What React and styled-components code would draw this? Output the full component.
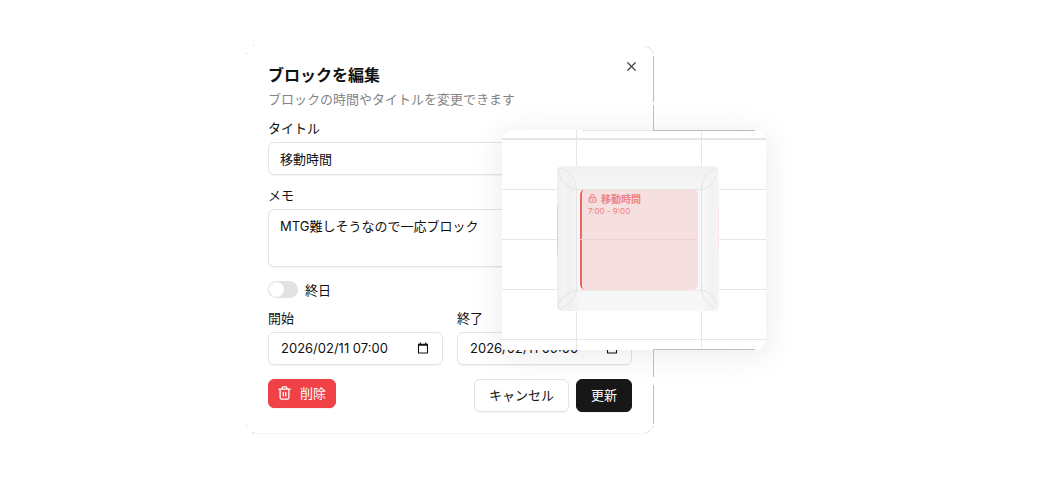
import React, { useState } from "react";
import styled, { createGlobalStyle } from "styled-components";
import { LockKeyhole, X } from "lucide-react";

export default function App() {
	const [title, setTitle] = useState("移動時間");
	const [memo, setMemo] = useState("MTG難しそうなので一応ブロック");
	const [allDay, setAllDay] = useState(false);
	const [start, setStart] = useState("2026/02/11 07:00");
	const [end, setEnd] = useState("2026/02/11 09:00");

	return (
		<>
			<GlobalStyle />
			<Page>
				<Stage>
					<Dialog role="dialog" aria-labelledby="dialog-title">
						<Header>
							<Title id="dialog-title">ブロックを編集</Title>
							<CloseButton type="button" aria-label="閉じる">
								<X size={15} strokeWidth={2} />
							</CloseButton>
						</Header>
						<Description>ブロックの時間やタイトルを変更できます</Description>

						<Field>
							<Label htmlFor="title">タイトル</Label>
							<TextInput
								id="title"
								value={title}
								onChange={(e) => setTitle(e.target.value)}
							/>
						</Field>
						<Field>
							<Label htmlFor="memo">メモ</Label>
							<TextArea
								id="memo"
								value={memo}
								onChange={(e) => setMemo(e.target.value)}
							/>
						</Field>

						<SwitchRow>
							<Switch
								id="all-day"
								type="checkbox"
								role="switch"
								checked={allDay}
								onChange={(e) => setAllDay(e.target.checked)}
							/>
							<Label htmlFor="all-day">終日</Label>
						</SwitchRow>

						<DateRow>
							<DateField id="start" label="開始" value={start} onChange={setStart} />
							<DateField id="end" label="終了" value={end} onChange={setEnd} />
						</DateRow>

						<Footer>
							<Button type="button" $variant="danger">
								<TrashIcon />
								削除
							</Button>
							<Actions>
								<Button type="button">キャンセル</Button>
								<Button type="button" $variant="primary">
									更新
								</Button>
							</Actions>
						</Footer>
					</Dialog>
					<Preview />
					<Edges />
				</Stage>
			</Page>
		</>
	);
}

function DateField({ id, label, value, onChange }) {
	return (
		<Field>
			<Label htmlFor={id}>{label}</Label>
			<DateBox>
				<DateInput
					id={id}
					value={value}
					onChange={(e) => onChange(e.target.value)}
				/>
				<PickerButton type="button" aria-label={`${label}の日付を選択`}>
					<svg width="12" height="12" viewBox="0 0 12 12">
						<path
							d="M1.500 2.500h9v8.500h-9z"
							fill="none"
							stroke="#111"
							strokeWidth="1.1"
							strokeLinejoin="round"
						/>
						<path d="M1 1.800h10v2H1zM2.700.6h1.200v1.500H2.700zM8.100.6h1.200v1.500H8.100z" fill="#111" />
					</svg>
				</PickerButton>
			</DateBox>
		</Field>
	);
}

function TrashIcon() {
	return (
		<svg
			width="13"
			height="14"
			viewBox="0 0 13 14"
			fill="none"
			stroke="currentColor"
			strokeWidth="1.3"
			strokeLinecap="round"
			strokeLinejoin="round"
			aria-hidden="true"
		>
			<path d="M.9 3.200h11.200M4.200 3V1.800q0-.9.9-.9h2.800q.9 0 .9.900V3" />
			<path d="M2.100 3.400v8q0 1.700 1.700 1.700h5.400q1.700 0 1.700-1.700v-8M5.300 6.300v3.600M7.700 6.300v3.600" />
		</svg>
	);
}

function Preview() {
	return (
		<PreviewCard>
			<Drawing viewBox="0 0 264 220" aria-hidden="true">
				<GridLines />
			</Drawing>
			<EventBlock>
				<EventTitle>
					<LockKeyhole size={9} strokeWidth={3} />
					移動時間
				</EventTitle>
				<EventTime>7:00 - 9:00</EventTime>
			</EventBlock>
			<Drawing viewBox="0 0 264 220" aria-hidden="true">
				<Bezel />
			</Drawing>
		</PreviewCard>
	);
}

function GridLines() {
	return (
		<g stroke="#e6e6e6">
			<path d="M0 9h264" strokeWidth="2" />
			<path d="M0 59.5h264M0 109.5h264M0 159.5h264M0 209.5h264" />
			<path d="M74.5 0v220M199.5 0v220" />
		</g>
	);
}

// glass frame around the event, bent grid lines in the corners
function Bezel() {
	return (
		<>
			<defs>
				<linearGradient id="side">
					<stop offset="0" stopColor="#efefef" />
					<stop offset="0.04" stopColor="#f4f4f4" />
					<stop offset="0.08" stopColor="#f0f0f0" />
					<stop offset="0.14" stopColor="#f7f7f7" />
					<stop offset="0.9" stopColor="#f7f7f7" />
					<stop offset="0.95" stopColor="#f2f2f2" />
					<stop offset="1" stopColor="#f5f5f5" />
				</linearGradient>
				<linearGradient id="top" x2="0" y2="1">
					<stop offset="0" stopColor="#f1f1f1" />
					<stop offset="1" stopColor="#f6f6f6" />
				</linearGradient>
			</defs>
			<path
				d="M60 36H212a5 5 0 0 1 5 5V176a5 5 0 0 1-5 5H60a5 5 0 0 1-5-5V41a5 5 0 0 1 5-5zM78 64V155a5 5 0 0 0 5 5H191a5 5 0 0 0 5-5V64a5 5 0 0 0-5-5H83a5 5 0 0 0-5 5z"
				fill="url(#side)"
				fillRule="evenodd"
			/>
			<path d="M60 36H212L199 59H75z" fill="url(#top)" />
			<path d="M78 109.5h118" stroke="#ecd2d3" />
			<g fill="none" stroke="#e4e4e4">
				<path d="M74.5 59v101M199.5 59v101M74 59.5h125" />
				<path d="M74 160.500h125" stroke="#ececec" />
				<path d="M74.5 60C74 49 67 40 57 38C54 44 62 57 74.5 59.5" />
				<path d="M199.5 60C199 49 205 41 214 39M214 46C211 54 206 58 199.5 59.500" />
				<path d="M74.5 159C74 168 67 176 57 179C54 174 62 162 74.5 160.5" />
				<path d="M199.5 159C200 168 206 174 212 177M214 174C212 166 207 161 199.5 160.500" />
			</g>
			<path d="M55.500 75v50" stroke="#f9ccd1" />
			<path d="M216.500 78v44" stroke="#fae6e8" />
		</>
	);
}

function Edges() {
	return (
		<EdgeLines viewBox="0 0 560 389" aria-hidden="true">
			<g fill="none" stroke="#bdbdbd">
				<path d="M407.5 11v46M407.5 60v25M407.5 304v28M407.5 340v39" />
				<path d="M407 85.5h102M407 304.5h102" />
				<path d="M336 85.500h71" stroke="#e6e6e6" />
			</g>
			<g fill="#c8c8c8">
				<path d="M0 8h1v1H0zM7 0h1v1H7zM0 380h1v1H0zM7 387h1v1H7z" />
			</g>
			<path
				d="M399 1.500q7 1 8.500 8M399 387.500q7-1 8.500-8"
				fill="none"
				stroke="#dcdcdc"
				strokeDasharray="2 1"
			/>
		</EdgeLines>
	);
}

const GlobalStyle = createGlobalStyle`
	* {
		box-sizing: border-box;
	}
	body {
		margin: 0;
		background: #fff;
		color: #111;
		font-family: Inter, "Noto Sans CJK JP", sans-serif;
		font-size: 13px;
		line-height: 20px;
	}
	button,
	input,
	textarea {
		font: inherit;
		color: inherit;
		margin: 0;
	}
`;

const Page = styled.main`
	display: flex;
	justify-content: center;
	align-items: center;
	min-height: 100vh;
	padding-bottom: 2px;
`;
const Stage = styled.div`
	position: relative;
	width: 560px;
`;
const Dialog = styled.section`
	display: flex;
	flex-direction: column;
	width: 408px;
	padding: 20px 22px 21px;
	border-bottom: 1px solid #f6f6f6;
	border-radius: 8px;
	background: #fff;
`;

const Header = styled.header`
	display: flex;
	justify-content: space-between;
	align-items: flex-start;
`;
const Title = styled.h1`
	margin: 0;
	font-size: 16px;
	line-height: 20px;
	font-weight: 700;
`;
const CloseButton = styled.button`
	display: flex;
	margin: -6px -7px 0 0;
	padding: 0;
	border: 0;
	background: none;
	color: #444;
`;
const Description = styled.p`
	margin: 4px 0 9px;
	color: #858585;
`;

const Field = styled.div`
	display: flex;
	flex-direction: column;
	gap: 4px;
	min-width: 0;
	margin-bottom: 10px;
`;
const Label = styled.label`
	line-height: 20px;
`;
const TextInput = styled.input`
	width: 100%;
	height: 33px;
	padding: 0 11px;
	border: 1px solid #e4e4e4;
	border-radius: 6px;
	background: #fff;
	box-shadow: 0 1px 1px rgba(0, 0, 0, 0.05);
`;
const TextArea = styled.textarea`
	display: block;
	width: 100%;
	height: 58px;
	padding: 6px 11px;
	border: 1px solid #e4e4e4;
	border-radius: 6px;
	background: #fff;
	resize: none;
	box-shadow: 0 1px 1px rgba(0, 0, 0, 0.05);
`;

const SwitchRow = styled.div`
	display: flex;
	align-items: center;
	gap: 7px;
	margin: 3px 0 8px;
`;
const Switch = styled.input`
	appearance: none;
	display: flex;
	align-items: center;
	width: 30px;
	height: 17px;
	padding: 1px;
	border-radius: 9px;
	background: ${(p) => (p.checked ? "#171717" : "#e2e2e2")};

	&::before {
		content: "";
		width: 15px;
		height: 15px;
		border-radius: 50%;
		background: #fff;
		margin-left: ${(p) => (p.checked ? "13px" : "0")};
	}
`;

const DateRow = styled.div`
	display: grid;
	grid-template-columns: repeat(2, minmax(0, 1fr));
	gap: 14px;
`;
const DateBox = styled.div`
	display: flex;
	align-items: center;
	height: 33px;
	padding: 0 13px 0 12px;
	border: 1px solid #e4e4e4;
	border-radius: 6px;
	box-shadow: 0 1px 1px rgba(0, 0, 0, 0.05);
`;
const DateInput = styled.input`
	flex: 1;
	min-width: 0;
	padding: 0;
	border: 0;
	background: none;
`;
const PickerButton = styled.button`
	display: flex;
	padding: 0;
	border: 0;
	background: none;
`;

const Footer = styled.footer`
	display: flex;
	justify-content: space-between;
	align-items: flex-start;
	margin-top: 4px;
`;
const Actions = styled.div`
	display: flex;
	gap: 7px;
`;

const variants = {
	danger: { bg: "#ef4146", color: "#fff", border: "#ef4146", height: 29, pad: 9 },
	primary: { bg: "#171717", color: "#fff", border: "#171717", height: 33, pad: 14 },
	outline: { bg: "#fff", color: "#111", border: "#e4e4e4", height: 33, pad: 14 },
};
const Button = styled.button.attrs((p) => ({
	$v: variants[p.$variant || "outline"],
}))`
	display: flex;
	align-items: center;
	gap: 9px;
	height: ${(p) => p.$v.height}px;
	padding: 0 ${(p) => p.$v.pad}px;
	border: 1px solid ${(p) => p.$v.border};
	border-radius: 6px;
	background: ${(p) => p.$v.bg};
	color: ${(p) => p.$v.color};
	box-shadow: 0 1px 1px rgba(0, 0, 0, 0.05);
`;

const PreviewCard = styled.aside`
	position: absolute;
	left: 256px;
	top: 85px;
	width: 264px;
	height: 220px;
	border-radius: 12px 12px 12px 4px;
	background: #fff;
	box-shadow: 0 4px 30px 4px rgba(0, 0, 0, 0.07);
`;
const Drawing = styled.svg`
	position: absolute;
	inset: 0;
	width: 100%;
	height: 100%;
`;
const EventBlock = styled.div`
	position: absolute;
	left: 78px;
	top: 59px;
	width: 118px;
	height: 101px;
	padding: 4px 6px;
	border-left: 2px solid #ef6468;
	border-radius: 5px;
	background: #f6dfdf;
	color: #f08084;
`;
const EventTitle = styled.div`
	display: flex;
	align-items: center;
	gap: 4px;
	font-size: 10px;
	line-height: 12px;
	font-weight: 700;
`;
const EventTime = styled.div`
	font-size: 8px;
	line-height: 12px;
`;
const EdgeLines = styled.svg`
	position: absolute;
	left: 0;
	top: 0;
	width: 560px;
	height: 389px;
	pointer-events: none;
`;
